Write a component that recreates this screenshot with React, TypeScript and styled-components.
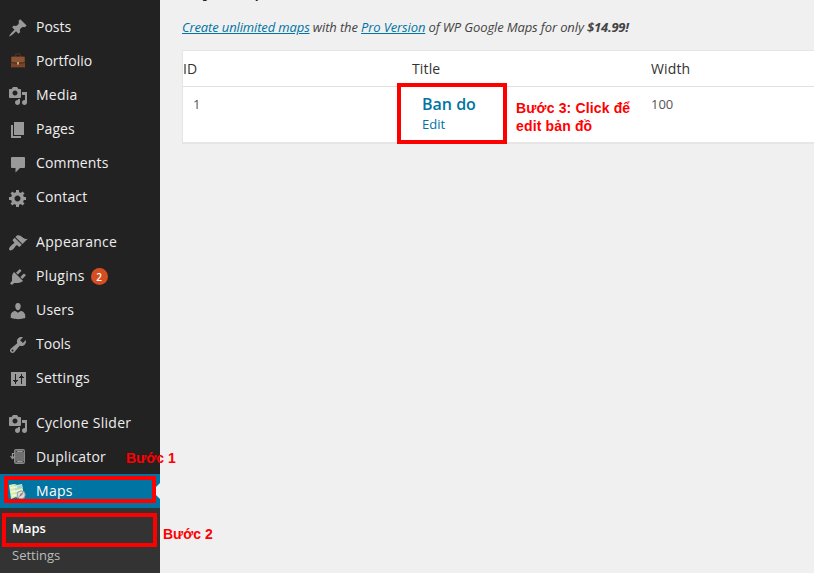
import React from "react";
import styled, { createGlobalStyle, css } from "styled-components";

const GlobalStyle = createGlobalStyle`
  * { box-sizing: border-box; }
  html, body { margin: 0; padding: 0; background: #f0f0f0; overflow: hidden; }
  body { font-family: "Open Sans", "Noto Sans", sans-serif; font-size: 13px; color: #444; }
  a { color: #0074a2; }
`;

const Screen = styled.div`
  position: relative;
  display: flex;
  width: 814px;
  height: 573px;
  overflow: hidden;
  background: #f0f0f0;
`;

const Sidebar = styled.nav`
  flex: 0 0 160px;
  background: #222;
  padding-top: 10px;
`;

const MenuGroup = styled.div`
  margin-bottom: 11px;
`;

const MenuItem = styled.div<{ $current?: boolean; $tracking: number }>`
  position: relative;
  display: flex;
  align-items: center;
  height: 34px;
  padding-left: 8px;
  font-size: 14px;
  line-height: 18px;
  letter-spacing: ${(p) => p.$tracking}px;
  color: ${(p) => (p.$current ? "#fff" : "#eee")};
  background: ${(p) => (p.$current ? "#0074a2" : "transparent")};
  ${(p) =>
    p.$current &&
    css`
      &::after {
        content: "";
        position: absolute;
        right: 0;
        top: 9px;
        border: 8px solid transparent;
        border-right-color: #f0f0f0;
        border-left-width: 0;
      }
    `}
`;

const IconSlot = styled.span`
  display: flex;
  width: 28px;
  padding-top: 2px;
  color: #999;
  svg { display: block; }
`;

const Badge = styled.span`
  display: flex;
  align-items: center;
  justify-content: center;
  width: 17px;
  height: 17px;
  margin: 1px 0 0 6px;
  border-radius: 50%;
  background: #d54e21;
  color: #fff;
  font-size: 10px;
  font-weight: 600;
  letter-spacing: 0;
`;

const SubMenu = styled.div`
  height: 65px;
  padding: 7px 0 0 12px;
  background: #333;
`;

const SubItem = styled.div<{ $current?: boolean }>`
  height: 27px;
  font-size: 13px;
  line-height: 27px;
  font-weight: ${(p) => (p.$current ? 600 : 400)};
  color: ${(p) => (p.$current ? "#fff" : "#bbb")};
`;

const Content = styled.main`
  flex: 1;
  min-width: 0;
  padding-left: 22px;
`;

const Heading = styled.h2`
  margin: -28px 0 0;
  font-size: 23px;
  font-weight: 400;
  line-height: 29px;
  color: #222;
`;

const Notice = styled.p`
  margin: 17px 0 0;
  height: 18px;
  font-size: 13px;
  line-height: 18px;
  font-style: italic;
  letter-spacing: -0.13px;
  white-space: nowrap;
  strong { font-weight: 700; letter-spacing: -0.2px; }
`;

const Table = styled.div`
  width: 660px;
  margin-top: 14px;
  background: #fff;
  border: 1px solid #e5e5e5;
  box-shadow: 0 1px 1px rgba(0, 0, 0, 0.04);
`;

const HeadRow = styled.div`
  display: grid;
  grid-template-columns: 229px 239px 1fr;
  height: 36px;
  border-bottom: 1px solid #e1e1e1;
  font-size: 14px;
  line-height: 35px;
  letter-spacing: 0.15px;
  color: #333;
`;

const BodyRow = styled.div`
  display: grid;
  grid-template-columns: 229px 239px 1fr;
  height: 55px;
  padding-top: 8px;
  color: #555;
`;

const Cell = styled.div<{ $indent?: boolean }>`
  padding-left: ${(p) => (p.$indent ? 10 : 0)}px;
  line-height: 18px;
`;

const MapTitle = styled.div`
  font-size: 16px;
  line-height: 18px;
  font-weight: 600;
  color: #0074a2;
`;

const EditLink = styled.div`
  margin-top: 2px;
  font-size: 13px;
  line-height: 18px;
  color: #0074a2;
`;

/* Tutorial marks drawn over the screen */
const Frame = styled.div<{ $x: number; $y: number; $w: number; $h: number }>`
  position: absolute;
  left: ${(p) => p.$x}px;
  top: ${(p) => p.$y}px;
  width: ${(p) => p.$w}px;
  height: ${(p) => p.$h}px;
  border: 4px solid #f00;
`;

const Note = styled.div<{ $x: number; $y: number; $tracking?: number }>`
  position: absolute;
  left: ${(p) => p.$x}px;
  top: ${(p) => p.$y}px;
  font: bold 14px/18px "Liberation Sans", Arial, sans-serif;
  letter-spacing: ${(p) => p.$tracking ?? 0}px;
  color: #f00;
  white-space: nowrap;
`;

const paths = {
  posts:
    "M10.44 3.02l1.82-1.82 6.36 6.35-1.83 1.82c-1.05-.68-2.48-.57-3.41.36l-.75.75c-.92.93-1.04 2.35-.35 3.41l-1.83 1.82-2.41-2.41-2.8 2.79c-.42.42-3.38 2.71-3.8 2.29s1.86-3.39 2.28-3.81l2.79-2.79L4.1 9.36l1.83-1.82c1.05.69 2.48.57 3.4-.36l.75-.75c.93-.92 1.05-2.35.36-3.41z",
  media:
    "M13 11V4c0-.55-.45-1-1-1h-1.67L9 1H5L3.67 3H2c-.55 0-1 .45-1 1v7c0 .55.45 1 1 1h10c.55 0 1-.45 1-1zM7 4.5c1.38 0 2.5 1.12 2.5 2.5S8.38 9.5 7 9.5 4.5 8.38 4.5 7 5.62 4.5 7 4.5zM14 6h5v10.5c0 1.38-1.12 2.5-2.5 2.5S14 17.88 14 16.5s1.12-2.5 2.5-2.5c.17 0 .34.02.5.05V9h-3V6zm-4 8.05V13h2v3.5c0 1.38-1.12 2.5-2.5 2.5S7 17.88 7 16.5 8.12 14 9.5 14c.17 0 .34.02.5.05z",
  pages: "M6 15V2h10v13H6zm-1 1h8v2H3V5h2v11z",
  comments:
    "M4 3h12q1 0 1 1v9q0 1-1 1h-4l-4.5 4.5V14H4q-1 0-1-1V4q0-1 1-1z",
  gear:
    "M18 12h-2.18c-.17.7-.44 1.35-.81 1.93l1.54 1.54-2.1 2.1-1.54-1.54c-.58.36-1.23.63-1.91.79V19H8v-2.18c-.68-.16-1.33-.43-1.91-.79l-1.54 1.54-2.12-2.12 1.54-1.54c-.36-.58-.63-1.23-.79-1.91H1V9.03h2.17c.16-.7.44-1.35.8-1.94L2.43 5.55l2.1-2.1 1.54 1.54c.58-.37 1.24-.64 1.93-.81V2h3v2.18c.68.16 1.33.43 1.91.79l1.54-1.54 2.12 2.12-1.54 1.54c.36.59.64 1.24.8 1.94H18V12zm-8.5 1.5c1.66 0 3-1.34 3-3s-1.34-3-3-3-3 1.34-3 3 1.34 3 3 3z",
  appearance:
    "M14.48 11.06L7.41 3.99l1.5-1.5c.5-.56 2.3-.47 3.51.32 1.21.8 1.43 1.28 2.91 2.1 1.18.64 2.45 1.26 4.45.85zm-.71.71L6.7 4.7 4.93 6.47c-.39.39-.39 1.02 0 1.41l1.06 1.06c.39.39.39 1.03 0 1.42-.6.6-1.43 1.11-2.21 1.69-.35.26-.7.53-1.01.84C1.43 14.23.4 16.08 1.4 17.07c.99 1 2.84-.03 4.18-1.36.31-.31.58-.66.85-1.02.57-.78 1.08-1.61 1.69-2.21.39-.39 1.02-.39 1.41 0l1.06 1.06c.39.39 1.02.39 1.41 0z",
  plugins:
    "M13.11 4.36L9.87 7.6 8 5.73l3.24-3.24c.35-.34 1.05-.2 1.56.32.52.51.66 1.21.31 1.55zm-8 1.77l.91-1.12 9.01 9.01-1.19.84c-.71.71-2.63 1.16-3.82 1.16H6.14L4.9 17.26c-.59.59-1.54.59-2.12 0-.59-.58-.59-1.53 0-2.12l1.24-1.24v-3.88c0-1.13.4-3.19 1.09-3.89zm7.26 3.97l3.24-3.24c.34-.35 1.04-.21 1.55.31.52.51.66 1.21.31 1.55l-3.24 3.25z",
  users:
    "M10 9.25c-2.27 0-2.73-3.44-2.73-3.44C7 4.02 7.82 2 9.97 2c2.16 0 2.98 2.02 2.71 3.81 0 0-.41 3.44-2.68 3.44zm0 2.57L12.72 10c2.39 0 4.52 2.33 4.52 4.53v2.49s-3.65 1.13-7.24 1.13c-3.65 0-7.24-1.13-7.24-1.13v-2.49c0-2.25 1.94-4.48 4.47-4.48z",
  tools:
    "M16.68 9.77c-1.34 1.34-3.3 1.67-4.95.99l-5.41 6.52c-.99.99-2.59.99-3.58 0s-.99-2.59 0-3.57l6.52-5.42c-.68-1.65-.35-3.61.99-4.95 1.28-1.28 3.12-1.62 4.72-1.06l-2.89 2.89 2.82 2.82 2.86-2.87c.53 1.58.18 3.39-1.08 4.65zM3.81 16.21c.4.39 1.04.39 1.43 0 .4-.4.4-1.04 0-1.43-.39-.4-1.03-.4-1.43 0-.39.39-.39 1.03 0 1.43z",
  settings:
    "M3 3h15v14H3zM7 5v6H5v1h1v1h1v2h1v-2h1v-1h1v-1H8V5zM13 5v2h-1v1h-1v1h2v6h1V9h2V8h-1V7h-1V5z",
};

type GlyphName = keyof typeof paths;

const Glyph = ({ name }: { name: GlyphName }) => (
  <svg width="20" height="20" viewBox="0 0 20 20" fill="currentColor" fillRule="evenodd">
    <path d={paths[name]} />
  </svg>
);

const Briefcase = () => (
  <svg width="20" height="20" viewBox="0 0 20 20">
    <path d="M7.5 5V3q0-1 1-1h3q1 0 1 1v2" fill="none" stroke="#4c2d1c" strokeWidth="1.4" />
    <rect x="3" y="4.5" width="14" height="11.5" rx="1" fill="#76452a" />
    <path d="M4 5h12v5H4z" fill="#8a5435" />
    <path d="M3 10.5l7 1 7-1M3.5 15.5h13" fill="none" stroke="#4a2b1b" />
    <rect x="9" y="10" width="2" height="2.5" fill="#c8a27c" />
  </svg>
);

const Package = () => (
  <svg width="20" height="20" viewBox="0 0 20 20">
    <rect x="6.5" y="1.5" width="10" height="14" rx="1" fill="#6f6f6f" stroke="#8a8a8a" />
    <path d="M9 3.5h5M9 13.5h5" stroke="#999" />
    <path d="M8 3.5h.8M15 3.5h.8M8 13.5h.8M15 13.5h.8" stroke="#333" />
    <path d="M6 5.5H4.5V10M2.5 8l2 2.5 2.5-2.5" fill="none" stroke="#999" strokeWidth="1.2" />
  </svg>
);

const MapIcon = () => (
  <svg width="20" height="20" viewBox="0 0 20 20">
    <path d="M1 3l5-1 3 1 5-1 2 13-5 1-3-1-5 2z" fill="#d8eeb0" />
    <path d="M6 2l3 1 2 13-3-1z" fill="#bcdfb6" />
    <path d="M2 6l12-2M3 10l12-2M4 14l8-2" stroke="#f5f8df" strokeWidth="1.3" />
    <path d="M9 4l5-1 .7 3-5 1z" fill="#9ed4dc" />
    <circle cx="13.2" cy="12.8" r="4" fill="#d9dddd" stroke="#8f9b9c" />
    <path d="M11 15l1.5-3 3-2-1.5 3z" fill="#667b83" />
    <path d="M12.5 12l3-2-1.5 3z" fill="#d77d69" />
  </svg>
);

const Entry = ({
  icon,
  label,
  badge,
  current,
  tracking = 0,
}: {
  icon: React.ReactNode;
  label: string;
  badge?: number;
  current?: boolean;
  tracking?: number;
}) => (
  <MenuItem $current={current} $tracking={tracking}>
    <IconSlot>{icon}</IconSlot>
    {label}
    {badge !== undefined && <Badge>{badge}</Badge>}
  </MenuItem>
);

export default function App() {
  return (
    <>
      <GlobalStyle />
      <Screen>
        <Sidebar>
          <MenuGroup>
            <Entry icon={<Glyph name="posts" />} label="Posts" />
            <Entry icon={<Briefcase />} label="Portfolio" />
            <Entry icon={<Glyph name="media" />} label="Media" tracking={0.25} />
            <Entry icon={<Glyph name="pages" />} label="Pages" tracking={0.1} />
            <Entry icon={<Glyph name="comments" />} label="Comments" tracking={0.15} />
            <Entry icon={<Glyph name="gear" />} label="Contact" tracking={0.15} />
          </MenuGroup>
          <MenuGroup>
            <Entry icon={<Glyph name="appearance" />} label="Appearance" tracking={0.3} />
            <Entry icon={<Glyph name="plugins" />} label="Plugins" badge={2} tracking={0.25} />
            <Entry icon={<Glyph name="users" />} label="Users" tracking={0.2} />
            <Entry icon={<Glyph name="tools" />} label="Tools" />
            <Entry icon={<Glyph name="settings" />} label="Settings" tracking={0.25} />
          </MenuGroup>
          <Entry icon={<Glyph name="media" />} label="Cyclone Slider" tracking={0.27} />
          <Entry icon={<Package />} label="Duplicator" tracking={0.2} />
          <Entry icon={<MapIcon />} label="Maps" current tracking={0.3} />
          <SubMenu>
            <SubItem $current>Maps</SubItem>
            <SubItem>Settings</SubItem>
          </SubMenu>
        </Sidebar>
        <Content>
          <Heading>My Maps</Heading>
          <Notice>
            <a href="#maps">Create unlimited maps</a> with the <a href="#pro">Pro Version</a> of WP
            Google Maps for only <strong>$14.99!</strong>
          </Notice>
          <Table>
            <HeadRow>
              <span>ID</span>
              <span>Title</span>
              <span>Width</span>
            </HeadRow>
            <BodyRow>
              <Cell $indent>1</Cell>
              <Cell $indent>
                <MapTitle>Ban do</MapTitle>
                <EditLink>Edit</EditLink>
              </Cell>
              <Cell>100</Cell>
            </BodyRow>
          </Table>
        </Content>
        <Frame $x={4} $y={476} $w={152} $h={27} />
        <Frame $x={2} $y={513} $w={155} $h={34} />
        <Frame $x={397} $y={83} $w={110} $h={61} />
        <Note $x={126} $y={449}>Bước 1</Note>
        <Note $x={163} $y={525}>Bước 2</Note>
        <Note $x={516} $y={99} $tracking={0.15}>
          Bước 3: Click để
          <br />
          edit bản đồ
        </Note>
      </Screen>
    </>
  );
}
